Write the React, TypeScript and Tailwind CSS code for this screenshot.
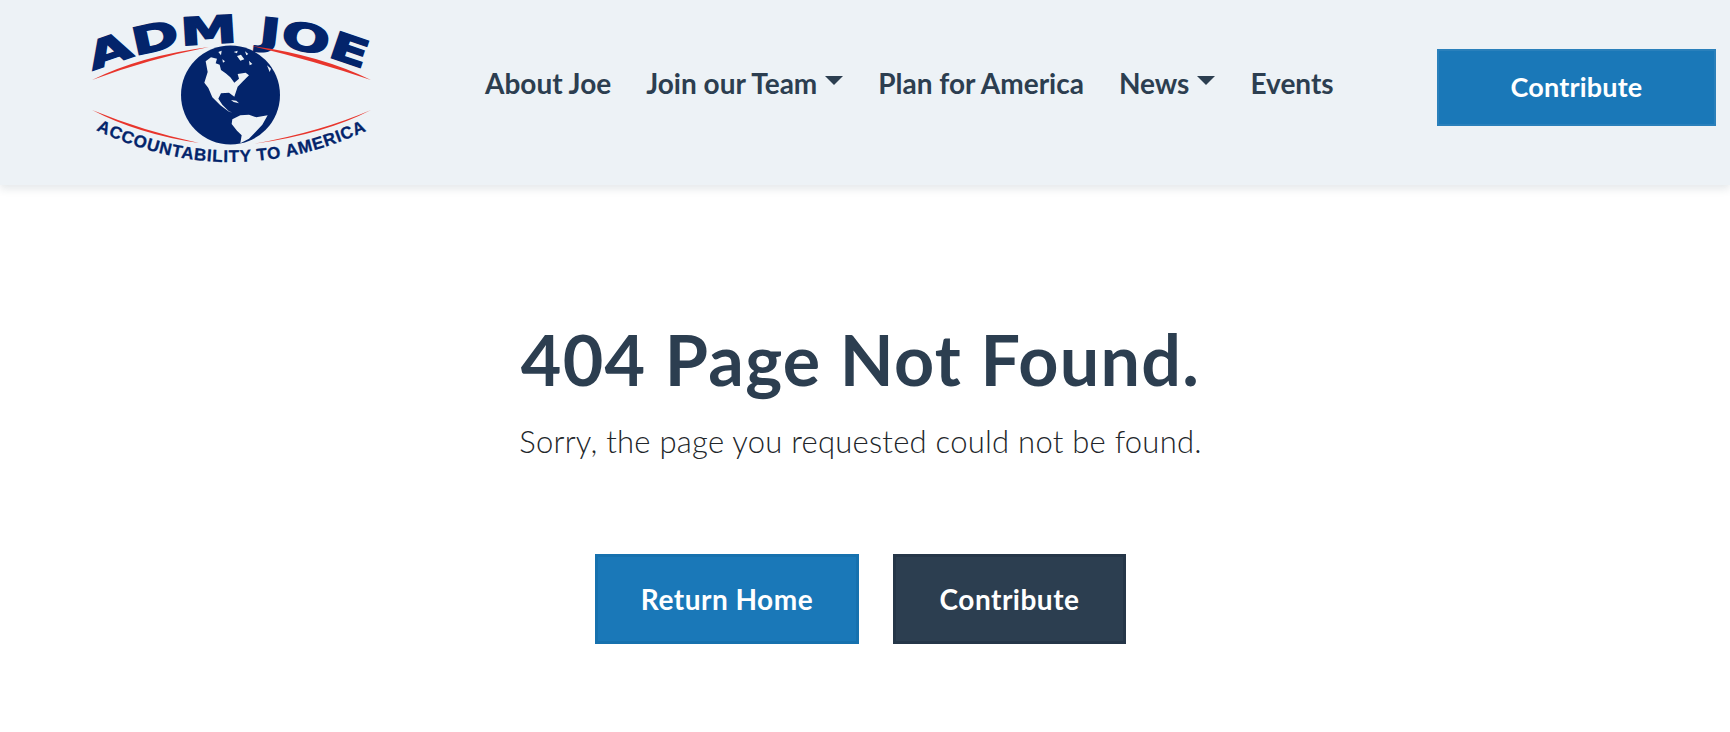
const navFont = "font-['Lato','Noto_Sans',sans-serif]";

const items = [
  { label: "About Joe", caret: false },
  { label: "Join our Team", caret: true },
  { label: "Plan for America", caret: false },
  { label: "News", caret: true },
  { label: "Events", caret: false },
];

function Caret() {
  return <span className="ml-[8px] mt-[-5px] h-0 w-0 border-x-[9px] border-t-[9px] border-x-transparent border-t-[#2c3e50]" />;
}

function Logo() {
  return (
    <svg width="320" height="170" viewBox="0 0 320 170" className="block shrink-0">
      <defs>
        <path id="logo-top" d="M21,72 Q160,14 300,72 L320,84" />
        <path id="logo-bottom" d="M26,130 Q160,194 298,130 L320,118" />
      </defs>
      <text fill="#03246b" stroke="#03246b" strokeWidth="1.4" fontFamily="'DejaVu Sans', sans-serif" fontWeight="700" fontSize="38">
        <textPath href="#logo-top" startOffset="2" textLength="278" lengthAdjust="spacingAndGlyphs">
          ADM JOE
        </textPath>
      </text>
      <text fill="#03246b" stroke="#03246b" strokeWidth="0.3" fontFamily="'Liberation Sans', sans-serif" fontWeight="700" fontSize="17">
        <textPath href="#logo-bottom" startOffset="0" textLength="280" lengthAdjust="spacing">
          ACCOUNTABILITY TO AMERICA
        </textPath>
      </text>
      <g fill="#e8352c">
        <path d="M22,80 Q70,56 139,47 Q78,59 22,80Z" />
        <path d="M182,46 Q250,55 301,80 Q245,61 182,46Z" />
        <path d="M22,110 Q68,134 129,143 Q73,131 22,110Z" />
        <path d="M301,110 Q255,134 183,144 Q250,132 301,110Z" />
      </g>
      <circle cx="160.5" cy="95" r="49.5" fill="#03246b" />
      <g transform="translate(105 40) scale(.3333)" fill="#edf2f6">
        <path d="M92,64 L108,52 L126,56 L122,70 L134,74 L138,90 L152,100 L166,112 L178,128 L192,116 L188,102 L212,98 L222,106 L204,124 L188,140 L178,170 L162,158 L138,160 L130,176 L142,194 L160,212 L172,218 L160,214 L136,196 L112,172 L100,144 L88,128 L98,96Z" />
        <path d="M172,238 L196,226 L222,224 L244,232 L278,226 L262,254 L238,280 L222,296 L196,310 L200,286 L186,272 L170,252Z" />
        <path d="M130,36 L140,32 L138,46Z M186,48 L198,44 L208,58 L196,62Z M176,36 L188,32 L186,40Z M222,62 L232,72 L224,76Z M276,76 L288,86 L284,96Z M152,112 L162,116 L156,122Z M142,58 L150,64 L144,68Z M210,34 L220,42 L214,46Z" />
        <path d="M168,180 L184,182 L192,190 L176,186Z" />
      </g>
    </svg>
  );
}

export default function App() {
  return (
    <div className={`min-h-[732px] bg-white ${navFont}`}>
      <header className="flex h-[185px] items-start bg-[#edf2f6] shadow-[0_4px_8px_rgba(44,62,80,0.12)]">
        <div className="ml-[70px]">
          <Logo />
        </div>
        <nav className="ml-[95px] mt-[66px] flex items-center gap-[35px] text-[28px] leading-[34px] font-bold text-[#2c3e50]">
          {items.map((item) => (
            <a key={item.label} className="flex items-center whitespace-nowrap">
              {item.label}
              {item.caret && <Caret />}
            </a>
          ))}
        </nav>
        <a className="ml-auto mr-[14px] mt-[49px] flex h-[77px] w-[279px] items-center justify-center border-[2px] border-[#2a80bb] bg-[#1a78b8] text-[27px] font-bold tracking-[0.2px] text-white">
          Contribute
        </a>
      </header>

      <main className="flex flex-col items-center pr-[9px] pt-[134px]">
        <h1 className="text-[70px] leading-[80px] font-bold tracking-[1.3px] text-[#2c3e50]">404 Page Not Found.</h1>
        <p className="mt-[20px] text-[31px] leading-[44px] font-light tracking-[0.25px] text-[#22262a]">
          Sorry, the page you requested could not be found.
        </p>
        <div className="mt-[91px] flex gap-[34px]">
          <a className="flex h-[90px] w-[264px] items-center justify-center border-[3px] border-[#1671ae] bg-[#1a78b8] text-[28px] font-bold tracking-[0.5px] text-white">
            Return Home
          </a>
          <a className="flex h-[90px] w-[233px] items-center justify-center border-[3px] border-[#253648] bg-[#2c3e50] text-[28px] font-bold tracking-[0.5px] text-white">
            Contribute
          </a>
        </div>
      </main>
    </div>
  );
}
